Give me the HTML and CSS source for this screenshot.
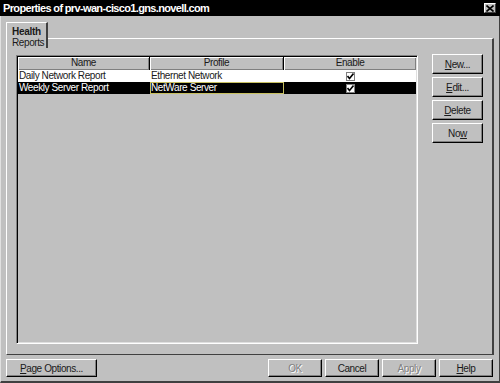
FILE: index.html
```html
<!DOCTYPE html>
<html>
<head>
<meta charset="utf-8">
<link rel="stylesheet" href="styles.css">
</head>
<body>
<div class="titlebar">
  <span class="title">Properties of prv-wan-cisco1.gns.novell.com</span>
  <span class="close"><svg width="8" height="7" viewBox="0 0 8 7"><path d="M0.5 0.5 L7.5 6.5 M7.5 0.5 L0.5 6.5" stroke="#000" stroke-width="1.6"/></svg></span>
</div>
<div class="window">
  <div class="main">
    <div class="tabrow">
      <div class="tab"><b>Health</b><span>Reports</span></div>
      <div class="tabfill"></div>
    </div>
    <div class="panel">
      <div class="table">
        <div class="row head">
          <div class="hcell">Name</div>
          <div class="hcell">Profile</div>
          <div class="hcell last">Enable</div>
        </div>
        <div class="row">
          <div class="cell">Daily Network Report</div>
          <div class="cell">Ethernet Network</div>
          <div class="cell center"><span class="check"><svg width="7" height="7" viewBox="0 0 7 7"><path d="M0.5 3 L2.5 5.5 L6.5 0.5" fill="none" stroke="#000" stroke-width="1.6"/></svg></span></div>
        </div>
        <div class="row sel">
          <div class="cell">Weekly Server Report</div>
          <div class="cell focus">NetWare Server</div>
          <div class="cell center"><span class="check"><svg width="7" height="7" viewBox="0 0 7 7"><path d="M0.5 3 L2.5 5.5 L6.5 0.5" fill="none" stroke="#000" stroke-width="1.6"/></svg></span></div>
        </div>
      </div>
      <div class="sidebtns">
        <div class="btn"><u>N</u>ew...</div>
        <div class="btn"><u>E</u>dit...</div>
        <div class="btn"><u>D</u>elete</div>
        <div class="btn">No<u>w</u></div>
      </div>
    </div>
  </div>
  <div class="bottombar">
    <div class="btn wide"><u>P</u>age Options...</div>
    <div class="spacer"></div>
    <div class="btn dis">OK</div>
    <div class="btn">Cancel</div>
    <div class="btn dis">Apply</div>
    <div class="btn"><u>H</u>elp</div>
  </div>
</div>
</body>
</html>
```
FILE: styles.css
```css
html, body {
  margin: 0;
  padding: 0;
}
body {
  width: 500px;
  height: 383px;
  overflow: hidden;
  background: #c0c0c0;
  font-family: "Liberation Sans", Arial, sans-serif;
  font-size: 10px;
  letter-spacing: -0.4px;
  color: #1a1a1a;
  display: flex;
  flex-direction: column;
}
.titlebar {
  height: 16px;
  flex: none;
  background: #000;
  color: #fff;
  display: flex;
  align-items: center;
  justify-content: space-between;
  padding: 0 4px 0 3px;
}
.title {
  font-weight: bold;
  font-size: 11px;
  letter-spacing: -0.65px;
}
.close {
  width: 12px;
  height: 10px;
  background: #c0c0c0;
  box-sizing: border-box;
  border-top: 1px solid #fff;
  border-left: 1px solid #fff;
  border-right: 1px solid #404040;
  border-bottom: 1px solid #404040;
  display: flex;
  align-items: center;
  justify-content: center;
}
.close svg { display: block; }
.window {
  flex: 1;
  display: flex;
  flex-direction: column;
  border-left: 1px solid #e0e0e0;
  border-right: 1px solid #404040;
  border-bottom: 2px solid #404040;
}
.main {
  padding: 6px 5px 0 5px;
  display: flex;
  flex-direction: column;
}
.tabrow {
  display: flex;
  height: 26px;
}
.tab {
  width: 42px;
  box-sizing: border-box;
  border-top: 1px solid #fff;
  border-left: 1px solid #fff;
  border-right: 2px solid #404040;
  border-top-left-radius: 1px;
  padding: 3px 0 0 5px;
  display: flex;
  flex-direction: column;
  line-height: 11px;
}
.tab b { font-size: 10px; letter-spacing: -0.3px; }
.tabfill {
  flex: 1;
  margin-top: 16px;
  border-top: 1px solid #fff;
  border-right: 2px solid #404040;
}
.panel {
  height: 307px;
  box-sizing: border-box;
  border-left: 1px solid #fff;
  border-right: 2px solid #404040;
  border-bottom: 1px solid #404040;
  padding: 7px 9px 10px 9px;
  display: flex;
  gap: 14px;
}
.table {
  width: 402px;
  box-sizing: border-box;
  border-top: 1px solid #808080;
  border-left: 1px solid #808080;
  border-right: 1px solid #fff;
  border-bottom: 1px solid #fff;
  box-shadow: inset 1px 1px 0 #000, inset -1px -1px 0 #dfdfdf;
  padding: 1px;
  background: #c0c0c0;
}
.row {
  display: grid;
  grid-template-columns: 132px 134px 1fr;
  height: 12px;
  line-height: 12px;
  background: #fff;
}
.row.head {
  height: 13px;
  line-height: 12px;
  background: #c0c0c0;
}
.hcell {
  text-align: center;
  box-shadow: inset 1px 1px 0 #fff, inset -1px -1px 0 #808080;
  border-right: 1px solid #000;
}
.hcell.last { border-right: none; }
.cell {
  padding-left: 1px;
  white-space: nowrap;
  overflow: hidden;
  box-sizing: border-box;
}
.row.sel {
  background: #000;
  color: #fff;
}
.cell.focus {
  border: 1px solid #c8c060;
  line-height: 10px;
  padding-left: 0;
}
.cell.center {
  display: flex;
  align-items: center;
  justify-content: center;
  padding-left: 0;
}
.check {
  width: 9px;
  height: 9px;
  box-sizing: border-box;
  background: #fff;
  border: 1px solid #808080;
  display: flex;
  align-items: center;
  justify-content: center;
}
.check svg { display: block; }
.sidebtns {
  display: flex;
  flex-direction: column;
  gap: 3px;
  margin-top: -1px;
}
.btn {
  width: 51px;
  height: 20px;
  box-sizing: border-box;
  border-top: 1px solid #fff;
  border-left: 1px solid #fff;
  border-right: 1px solid #000;
  border-bottom: 1px solid #000;
  box-shadow: inset -1px -1px 0 #808080;
  display: flex;
  align-items: center;
  justify-content: center;
  background: #c0c0c0;
}
.bottombar {
  display: flex;
  gap: 3px;
  padding: 4px 6px 0 5px;
}
.bottombar .btn {
  width: 54px;
  height: 18px;
}
.bottombar .btn.wide {
  width: 91px;
}
.spacer { flex: 1; }
.btn.dis {
  color: #808080;
  text-shadow: 1px 1px 0 #fff;
}
```
